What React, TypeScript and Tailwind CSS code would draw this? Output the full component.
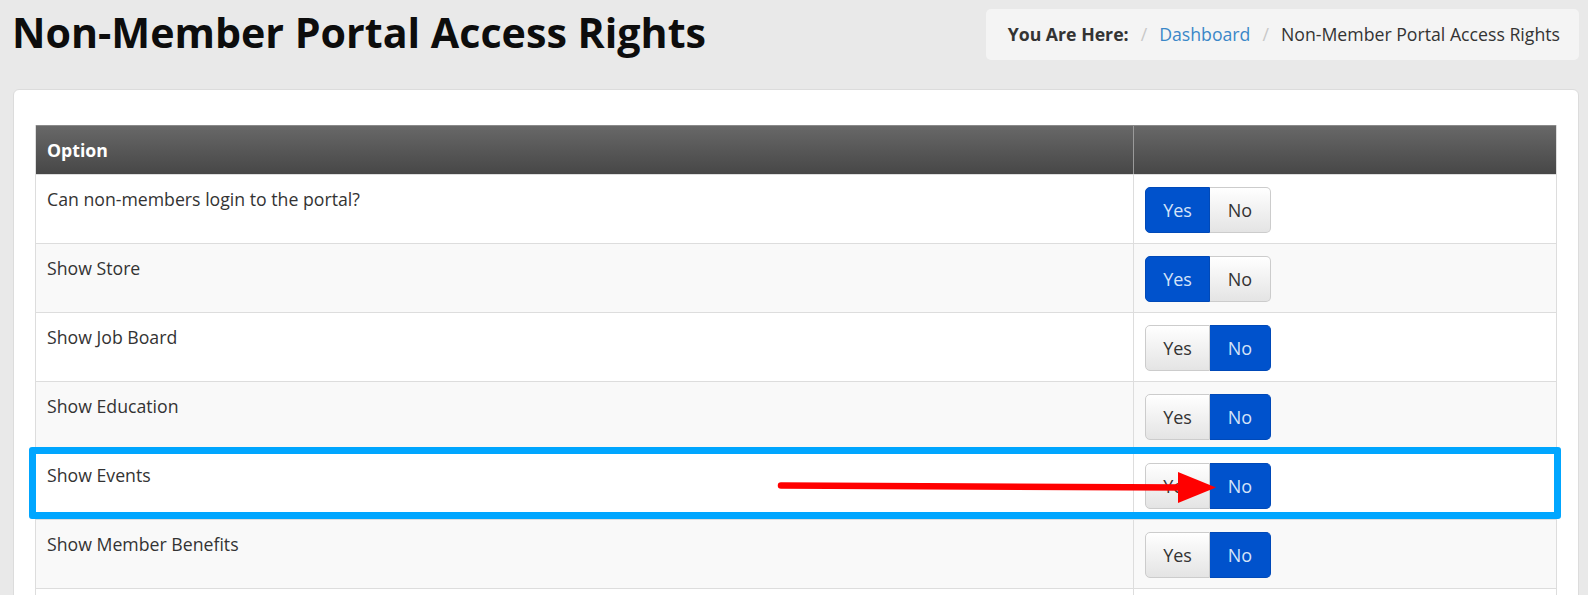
import React from "react";

type Row = { label: string; yes: boolean };

const rows: Row[] = [
  { label: "Can non-members login to the portal?", yes: true },
  { label: "Show Store", yes: true },
  { label: "Show Job Board", yes: false },
  { label: "Show Education", yes: false },
  { label: "Show Events", yes: false },
  { label: "Show Member Benefits", yes: false },
];

function Toggle({ yes }: { yes: boolean }) {
  const active = "bg-[#0052cc] border-[#0049b8] text-[#d5e3f8]";
  const inactive =
    "bg-gradient-to-b from-[#ffffff] to-[#e4e4e4] border-[#cccccc] text-[#333333]";
  return (
    <div className="flex h-[46px] text-[18px] leading-[24px]">
      <div
        className={`flex w-[65px] items-center justify-center rounded-l-[5px] border ${
          yes ? active : inactive
        }`}
      >
        Yes
      </div>
      <div
        className={`flex w-[61px] items-center justify-center rounded-r-[5px] border border-l-0 ${
          yes ? inactive : active
        }`}
      >
        No
      </div>
    </div>
  );
}

export default function App() {
  return (
    <div className="relative h-[595px] overflow-hidden bg-[#e9e9e9] pl-[13px] pr-[9px] font-['Open_Sans',sans-serif] text-[#333]">
      <div className="flex items-start justify-between">
        <h1 className="-ml-[1px] pt-[6px] text-[41.2px] font-bold leading-[52px] text-[#0d0d0d]">
          Non-Member Portal Access Rights
        </h1>
        <div className="mt-[9px] flex h-[51px] items-center rounded-[5px] bg-[#f4f4f4] pl-[22px] pr-[19px] text-[17.7px]">
          <span className="font-bold text-[#333]">You Are Here:</span>
          <span className="px-[12px] text-[#c8c8c8]">/</span>
          <span className="text-[#3a87c8]">Dashboard</span>
          <span className="px-[12px] text-[#c8c8c8]">/</span>
          <span className="text-[#333]">Non-Member Portal Access Rights</span>
        </div>
      </div>

      <div className="mt-[29px] h-[600px] rounded-[6px] border border-[#dcdcdc] bg-white px-[21px] pt-[35px]">
        <div className="border-x border-[#dddddd]">
          <div className="flex h-[49px] border-t border-[#8a8a8a] bg-gradient-to-b from-[#686868] to-[#474747] text-[17.7px] font-bold text-white">
            <div className="flex w-[1098px] items-center border-r border-[#9a9a9a] pl-[11px]">
              Option
            </div>
            <div className="flex-1" />
          </div>
          {rows.map((r, i) => (
            <div
              key={r.label}
              className={`flex h-[69px] border-t border-[#dddddd] ${
                i % 2 === 1 ? "bg-[#f9f9f9]" : "bg-white"
              }`}
            >
              <div className="w-[1098px] border-r border-[#dddddd] pl-[11px] pt-[12px] text-[17.7px] leading-[24px]">
                {r.label}
              </div>
              <div className="flex-1 pl-[11px] pt-[12px]">
                <Toggle yes={r.yes} />
              </div>
            </div>
          ))}
          <div className="flex h-[69px] border-t border-[#dddddd] bg-white">
            <div className="w-[1098px] border-r border-[#dddddd]" />
            <div className="flex-1" />
          </div>
        </div>
      </div>

      {/* annotation overlay */}
      <div className="pointer-events-none absolute left-[29px] top-[447px] h-[72px] w-[1532px] rounded-[3px] border-[7px] border-[#00a6ff]" />
      <svg
        className="pointer-events-none absolute left-0 top-0"
        width="1588"
        height="595"
        viewBox="0 0 1588 595"
      >
        <path
          d="M781 485.5 L1182 487.5"
          stroke="#ff0000"
          strokeWidth="6.5"
          strokeLinecap="round"
          fill="none"
        />
        <polygon points="1178,472 1216,487.5 1178,503" fill="#ff0000" />
      </svg>
    </div>
  );
}
